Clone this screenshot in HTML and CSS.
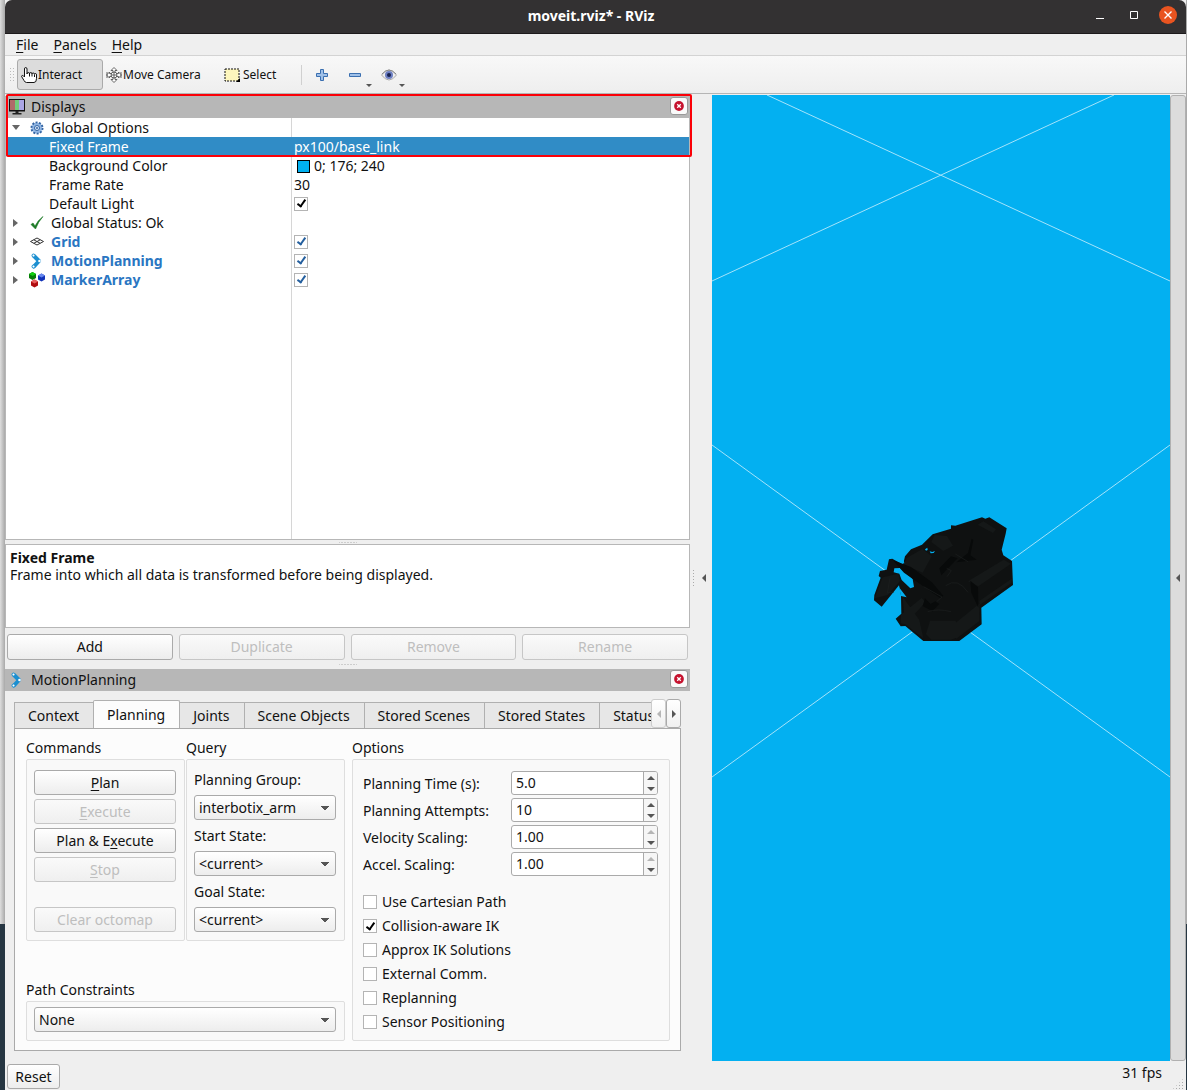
FILE: index.html
```html
<!DOCTYPE html>
<html lang="en">
<head>
<meta charset="utf-8">
<title>moveit.rviz* - RViz</title>
<link rel="stylesheet" href="styles.css">
</head>
<body>
<svg class="defs" aria-hidden="true">
  <defs>
    <symbol id="arm" viewBox="0 0 12 16">
      <path d="M3 3 8 8 3 13.500" fill="none" stroke="#1c8fd0" stroke-width="4" stroke-linejoin="round" stroke-linecap="round"/>
      <circle cx="2.500" cy="2.500" r="1.500" fill="#fff" stroke="#1c8fd0"/><circle cx="8.500" cy="8" r="1.300" fill="#fff"/><circle cx="2.500" cy="13.500" r="1.500" fill="#fff" stroke="#1c8fd0"/>
    </symbol>
    <symbol id="close" viewBox="0 0 18 18">
      <circle cx="9" cy="9" r="5.500" fill="#c6132f"/><path d="m7 7 4 4m0-4-4 4" stroke="#fff" stroke-width="1.500"/>
    </symbol>
  </defs>
</svg>
<div class="desktop">
<div class="window">
  <header class="titlebar">
    <h1>moveit.rviz* - RViz</h1>
    <div class="window-buttons">
      <button aria-label="Minimize"><svg width="18" height="18"><path d="M5 12.500h8" stroke="#fff"/></svg></button>
      <button aria-label="Maximize"><svg width="18" height="18"><path d="M5.500 5.500h7v7h-7z" fill="none" stroke="#fff"/></svg></button>
      <button aria-label="Close"><svg width="18" height="18"><circle cx="9" cy="9" r="9" fill="#e95420"/><path d="m5.500 5.500 7 7m0-7-7 7" stroke="#fff" stroke-width="1.400"/></svg></button>
    </div>
  </header>
  <nav class="menubar">
    <button><u>F</u>ile</button><button><u>P</u>anels</button><button><u>H</u>elp</button>
  </nav>
  <div class="toolbar">
    <span class="grip"></span>
    <button class="tool pressed"><svg width="16" height="16"><path d="M3.500 10V2Q3.500.5 4.700.5T6 2v5q0-1.500 1.300-1.500T8.500 7q0-1.500 1.300-1.500T11 7q0-1 1.200-1t1.300 1.300q0-.8 1-.8t1 1.500v3.500q0 4-2.500 4H5.500q-1.500 0-2.500-2L.700 9.700Q.300 8.700 1.300 8.500T3.500 10M8.500 7v2.500M11 7v2.500M13.500 7.500V10" fill="#fff" stroke="#111"/></svg>Interact</button>
    <button class="tool camera"><svg width="16" height="16" fill="#fff" stroke="#555" stroke-width=".9"><path d="m8 .5 3 3H9v3h3.500V5L15.500 8l-3 3V9.500H9v3h2l-3 3-3-3h2v-3H3.500V11L.500 8l3-3v1.500H7v-3H5z"/><circle cx="8" cy="8" r="3"/><path d="M1 5v6M15 5v6M5 8h6M8 5v6"/></svg>Move Camera</button>
    <button class="tool select"><svg width="17" height="14"><path d="M1 1h14v12H1z" fill="#fdf6bd" stroke="#111" stroke-dasharray="2 1"/><path d="m16 10v4h-4z" fill="#000"/></svg>Select</button>
    <span class="separator"></span>
    <button class="tool small" aria-label="Add tool"><svg width="14" height="14"><path d="M5.500 1.500h3v4h4v3h-4v4h-3v-4h-4v-3h4z" fill="#9fc0e8" stroke="#3a6fb0"/></svg></button>
    <button class="tool small menu" aria-label="Remove tool"><svg width="14" height="14"><path d="M1.500 5.500h11v3h-11z" fill="#9fc0e8" stroke="#3a6fb0"/></svg></button>
    <button class="tool small menu" aria-label="Tool visibility"><svg width="16" height="14"><path d="M.500 7Q8-3 15.500 7 8 17 .500 7z" fill="#eee" stroke="#aaa"/><path d="M1 6Q8-2 15 6" fill="none" stroke="#888"/><circle cx="8" cy="7" r="4" fill="#6d7fc2"/><circle cx="8" cy="7" r="2" fill="#17224f"/></svg></button>
  </div>

  <main class="workspace">
    <div class="docks">
      <section class="displays">
        <div class="dock-title"><svg width="18" height="16"><path d="M1 0h16v12.500H1z" fill="#111"/><path d="M2 1h5v10H2z" fill="#b06a6a"/><path d="M7 1h4v10H7z" fill="#72cc7c"/><path d="M11 1h5v10h-5z" fill="#aaa5e6"/><path d="M7.500 12h3v2h3v1.500h-9V14h3z" fill="#222"/></svg><h2>Displays</h2><button class="dock-close" aria-label="Close Displays"><svg width="16" height="16"><use href="#close"/></svg></button></div>
        <div class="tree">
          <table>
            <tbody>
            <tr class="top open"><th scope="row"><span><svg width="14" height="14"><circle cx="7" cy="7" r="5.500" fill="#9fc0e8" stroke="#3465a4" stroke-width="2" stroke-dasharray="2 1.400"/><circle cx="7" cy="7" r="4.500" fill="#8fb4e2"/><circle cx="7" cy="7" r="2.500" fill="#dce9f8" stroke="#3465a4"/><circle cx="7" cy="7" r="1" fill="#3465a4"/></svg>Global Options</span></th><td></td></tr>
            <tr class="chosen"><th scope="row">Fixed Frame</th><td>px100/base_link</td></tr>
            <tr><th scope="row">Background Color</th><td><span class="swatch"></span>0; 176; 240</td></tr>
            <tr><th scope="row">Frame Rate</th><td>30</td></tr>
            <tr><th scope="row"><label for="light">Default Light</label></th><td><input type="checkbox" id="light" checked></td></tr>
            <tr class="top"><th scope="row"><span><svg width="14" height="14"><path d="M1 8.500 3 7l2 3Q8 4 13 .5 8 6 5.500 13z" fill="#1d7a26" stroke="#1d7a26" stroke-width=".6"/></svg>Global Status: Ok</span></th><td></td></tr>
            <tr class="top display"><th scope="row"><span><svg width="14" height="14" fill="none" stroke="#333"><path d="m7 3 6.500 3.500L7 10 .500 6.500zM3.800 4.800l6.400 3.500m0-3.500L3.800 8.300"/></svg><label for="grid">Grid</label></span></th><td><input type="checkbox" id="grid" checked></td></tr>
            <tr class="top display"><th scope="row"><span><svg width="14" height="16"><use href="#arm"/></svg><label for="motion">MotionPlanning</label></span></th><td><input type="checkbox" id="motion" checked></td></tr>
            <tr class="top display"><th scope="row"><span><svg class="wide" width="18" height="16"><path d="m4.500 0 3.500 2v4L4.500 8 1 6V2z" fill="#087c08"/><path d="m4.500 0 3.500 2-3.500 2L1 2z" fill="#10d010"/><path d="m13.500 1.500 3.500 2v4l-3.500 2-3.500-2v-4z" fill="#1233b8"/><path d="m13.500 1.500 3.500 2-3.500 2-3.500-2z" fill="#6788f0"/><path d="m6.500 7.500 3.500 2v4l-3.500 2-3.500-2v-4z" fill="#b00d10"/><path d="m6.500 7.500 3.500 2-3.500 2-3.500-2z" fill="#e86060"/></svg><label for="marker">MarkerArray</label></span></th><td><input type="checkbox" id="marker" checked></td></tr>
            </tbody>
          </table>
        </div>
        <div class="highlight"></div>
      </section>
      <div class="splitter"></div>
      <section class="help"><h3>Fixed Frame</h3><p>Frame into which all data is transformed before being displayed.</p></section>
      <div class="actions"><button class="btn">Add</button><button class="btn" disabled>Duplicate</button><button class="btn" disabled>Remove</button><button class="btn" disabled>Rename</button></div>
      <div class="splitter lower"></div>
      <section class="motion">
        <div class="dock-title"><svg width="18" height="16"><use href="#arm"/></svg><h2>MotionPlanning</h2><button class="dock-close" aria-label="Close MotionPlanning"><svg width="16" height="16"><use href="#close"/></svg></button></div>
        <div class="tabs" role="tablist">
          <div class="tab-strip"><button role="tab">Context</button><button role="tab" aria-selected="true">Planning</button><button role="tab">Joints</button><button role="tab">Scene Objects</button><button role="tab">Stored Scenes</button><button role="tab">Stored States</button><button role="tab">Status</button></div>
          <button class="scroll" aria-label="Scroll left" disabled><i class="tri left"></i></button><button class="scroll" aria-label="Scroll right"><i class="tri right"></i></button>
        </div>
        <div class="planning">
          <section class="group commands"><h3>Commands</h3><div class="box">
            <button class="btn"><u>P</u>lan</button><button class="btn" disabled><u>E</u>xecute</button><button class="btn">Plan &amp; E<u>x</u>ecute</button><button class="btn" disabled><u>S</u>top</button><button class="btn last" disabled>Clear octomap</button></div></section>
          <section class="group query"><h3>Query</h3><div class="box">
            <label for="pg">Planning Group:</label><select id="pg"><option>interbotix_arm</option></select>
            <label for="ss">Start State:</label><select id="ss"><option>&lt;current&gt;</option></select>
            <label for="gs">Goal State:</label><select id="gs"><option>&lt;current&gt;</option></select></div></section>
          <section class="group path"><h3><label for="pc">Path Constraints</label></h3><div class="box"><select id="pc"><option>None</option></select></div></section>
          <section class="group options"><h3>Options</h3><div class="box">
            <div class="field"><label for="time">Planning Time (s):</label><div class="spin"><input id="time" value="5.0"><button aria-label="Increase"><i class="tri up"></i></button><button aria-label="Decrease"><i class="tri down"></i></button></div></div>
            <div class="field"><label for="tries">Planning Attempts:</label><div class="spin"><input id="tries" value="10"><button aria-label="Increase"><i class="tri up"></i></button><button aria-label="Decrease"><i class="tri down"></i></button></div></div>
            <div class="field"><label for="vel">Velocity Scaling:</label><div class="spin"><input id="vel" value="1.00"><button aria-label="Increase" disabled><i class="tri up"></i></button><button aria-label="Decrease"><i class="tri down"></i></button></div></div>
            <div class="field"><label for="acc">Accel. Scaling:</label><div class="spin"><input id="acc" value="1.00"><button aria-label="Increase" disabled><i class="tri up"></i></button><button aria-label="Decrease"><i class="tri down"></i></button></div></div>
            <div class="checks">
              <label><input type="checkbox">Use Cartesian Path</label>
              <label><input type="checkbox" checked>Collision-aware IK</label>
              <label><input type="checkbox">Approx IK Solutions</label>
              <label><input type="checkbox">External Comm.</label>
              <label><input type="checkbox">Replanning</label>
              <label><input type="checkbox">Sensor Positioning</label>
            </div></div></section>
        </div>
      </section>
    </div>
    <button class="collapse handle" aria-label="Hide left dock"><i class="tri left"></i></button>
    <div class="view">
      <svg viewBox="0 0 458 966" preserveAspectRatio="xMidYMid slice" role="img" aria-label="Robot arm on grid">
        <g stroke="#a5e3fa"><path d="M55 0 458 186M402 0 0 186M0 350 458 682M458 350 0 682"/></g>
        <g transform="translate(138 405) scale(.33333)">
          <path fill="#0f1111" d="M248 103 303 86V76l13 1 80-25 10 4 12-4 52 33-3 16-12 48 5 17 26 17 3 72-95 68 1 50-67 50H220l-54-45-14 1-15-23 17-15-1-55-6-30-52 64-23-19 1-16 19-52-6-5 4-15 20-4 7-31 10-2 32 18 6-25 18-21 33-14z"/>
          <path fill="#03b0f1" d="m133 205 17-1 38 33 4 24-11 4-26-25-7-19-17-4zM225 148l7-5 1 7-5 2zM239 154l8 2 8-3-4 6-9 1zM164 192l-8-6 5-4zM147 262l23 30-17-4z"/>
          <path fill="#151818" d="m98 232 47-11 5 22-37 42-39 10zM170 174l47-27 28 22-27 49-57-24zM254 105l37 3 18 29-29 16-36-27zM400 64l38 24-9 11-46-25zM354 244l31 15 98-68-22-12zM389 302l96-66v12l-96 67zM153 344l62-50 11 13-60 66-14-3zM158 290l50 70 12 55-55-43zM240 362h77l10 48-24 9h-59l-16-17zM310 374l78-63v52l-69 53z"/>
          <path fill="#080a0a" d="m128 180 55 21 62 45 35 41-9 8-49-35-60-42zM361 242l23 20 1 61-21-45zM218 318l29 16 21-22-12-8-14 8-17-17zM268 205l35-36 20 6-49 51zM319 187l35-28 11-43 5 4-9 46 19 13z"/>
          <path fill="none" stroke="#1c1f1f" stroke-width="2" d="m221 260 55 31-16 14M287 257q36-26 67 20M120 235l-8 44 20-3M290 205l14 7-13 18M316 162l38 23M233 335q30-10 70 0"/>
        </g>
      </svg>
    </div>
    <button class="collapse raised" aria-label="Show right dock"><i class="tri left"></i></button>
  </main>
  <footer class="statusbar"><button class="btn">Reset</button><output>31 fps</output><span class="resize"></span></footer>
</div>
</div>
</body>
</html>
```
FILE: styles.css
```css
*, ::before, ::after { box-sizing: border-box; }
body { margin: 0; color: #111; font: 14px/18px "Noto Sans", "Open Sans", sans-serif; }
button, input, select { margin: 0; padding: 0; border: 0; color: inherit; font: inherit; background: none; }
h1, h2, h3, p { margin: 0; font-size: 14px; font-weight: 400; }
svg { display: block; flex: none; }
u { text-underline-offset: 2px; }
.defs { position: absolute; width: 0; height: 0; }

.desktop { min-height: 100vh; display: flex; padding: 0 1px 0 5px; background: linear-gradient(90deg, #dedede, #a9a9a9 5px, #aaa 6px) 0 0 / 100% 924px no-repeat, #263642; }
.window { flex: 1; min-width: 0; display: flex; flex-direction: column; background: #efefef; }

.titlebar { height: 34px; display: grid; grid-template-columns: 1fr auto 1fr; align-items: center; padding-right: 9px; background: #333132; border-bottom: 1px solid #1d1a1b; border-radius: 7px 7px 0 0; color: #fff; }
.titlebar h1 { grid-column: 2; font-weight: 700; padding-bottom: 2px; }
.window-buttons { display: flex; justify-content: flex-end; gap: 16px; padding-bottom: 3px; }

.menubar { height: 22px; display: flex; gap: 15px; padding: 0 11px; border-bottom: 1px solid #d3d3d3; }
.toolbar { height: 38px; display: flex; align-items: center; padding: 0 4px; background: linear-gradient(#f8f8f8, #eee); border-bottom: 1px solid #b5b5b5; font-size: 12px; }
.grip { width: 5px; height: 16px; margin-right: 3px; background: radial-gradient(circle, #bbb 1px, transparent 1px) 0 0 / 3px 3px; }
.tool { height: 31px; display: flex; align-items: center; gap: 2px; padding: 0 3px; }
.pressed { width: 86px; gap: 1px; background: #dcdcdc; border: 1px solid #aaa; border-radius: 3px; }
.camera { width: 118px; gap: 1px; }
.select { width: 80px; }
.separator { width: 1px; height: 20px; background: #d0d0d0; margin-right: 10px; }
.small { width: 33px; position: relative; }
.menu::after { content: ""; position: absolute; right: 6px; bottom: 3px; border: 3px solid transparent; border-top-color: #555; border-bottom: 0; }

.workspace { flex: 1; display: flex; padding-top: 1px; }
.docks { width: 685px; flex: none; display: flex; flex-direction: column; padding: 1px 0 10px; }
.displays { flex: 1; display: flex; flex-direction: column; position: relative; }
.dock-title { height: 22px; display: flex; align-items: center; gap: 5px; padding: 0 2px 0 3px; background: #b7b7b7; }
.dock-title h2 { flex: 1; }
.dock-close { width: 18px; height: 18px; padding: 0; display: grid; place-items: center; background: #fafafa; border: 1px solid #999; border-radius: 3px; margin-bottom: 2px; }
.highlight { position: absolute; inset: -2px -2px auto 1px; height: 63px; border: 2px solid #fb0007; border-radius: 2px; }
.tree { flex: 1; border: 1px solid #b7b7b7; border-top: 0; background: linear-gradient(#d6d6d6, #d6d6d6) 285px 0 / 1px 100% no-repeat #fff; }
.tree table { width: 100%; table-layout: fixed; border-collapse: collapse; }
.tree tr { height: 19px; }
.tree th { width: 286px; padding: 0 0 0 43px; font-weight: 400; text-align: left; }
.tree td { padding: 0 0 0 2px; }
.tree th, .tree td { line-height: 19px; }
.tree .top th { padding-left: 7px; }
.tree th span { display: flex; align-items: center; height: 19px; }
.tree th span::before { content: ""; margin-right: 12px; border: 4px solid transparent; border-left: 5px solid #666; border-right: 0; flex: none; }
.tree .open th span::before { border: 4px solid transparent; border-top: 5px solid #666; border-bottom: 0; margin: 0 10px 0 -1px; }
.tree th svg { margin-right: 7px; }
.tree th svg.wide { margin: 0 5px 0 -2px; }
.tree .display label { color: #2a76c2; font-weight: 700; }
.tree .chosen { background: #308cc6; color: #fff; }
.swatch { display: inline-block; width: 13px; height: 13px; margin: 0 4px 0 3px; border: 1px solid #000; background: #00b0f0; vertical-align: -2px; }

input[type="checkbox"] { appearance: none; flex: none; width: 14px; height: 14px; background: #fff; border: 1px solid #b4b4b4; display: grid; place-items: center; }
input[type="checkbox"]:checked::after { content: ""; width: 5px; height: 9px; border: solid #000; border-width: 0 2px 2px 0; transform: rotate(35deg); margin-bottom: 2px; }
.tree .display input[type="checkbox"]:checked::after { border-color: #245f9e; }

.splitter { height: 4px; background: radial-gradient(circle, #aaa 1px, transparent 1px) center / 3px 3px repeat-x; width: 18px; margin: 0 auto; }
.lower { height: 9px; }
.help { height: 84px; padding: 4px; background: #fff; border: 1px solid #b7b7b7; line-height: 17px; }
.help h3 { font-weight: 700; }
.actions { display: grid; grid-template-columns: repeat(4, 1fr); gap: 6px; padding: 6px 2px 0; }
.btn { height: 26px; border: 1px solid #aaa; border-radius: 3px; background: linear-gradient(#fff, #ededed); }
.btn:disabled { color: #bebebe; border-color: #c6c6c6; background: linear-gradient(#fafafa, #efefef); }

.tabs { height: 37px; display: flex; align-items: flex-end; padding: 0 9px; }
.tab-strip { flex: 1; min-width: 0; overflow: hidden; height: 29px; display: flex; align-items: flex-end; }
.tab-strip button { flex: none; height: 26px; padding: 0 14px 0 13px; background: #e7e7e7; border: 1px solid #b0b0b0; border-width: 1px 0 0 1px; }
.tab-strip button[aria-selected] { height: 28px; background: #fcfcfc; border-right-width: 1px; border-radius: 2px 2px 0 0; }
.tab-strip button[aria-selected] + button { border-left: 0; }
.scroll { width: 15px; height: 29px; display: grid; place-items: center; border: 1px solid #aaa; border-radius: 3px; background: linear-gradient(#fff, #f0f0f0); }
.scroll:disabled { border-color: #ccc; }
.planning { margin: 0 9px; padding: 10px 10px 9px 11px; background: #fcfcfc; border: 1px solid #aaa; display: grid; grid-template-columns: 159px 159px 1fr; grid-template-rows: 1fr auto; column-gap: 1px; }
.group { display: flex; flex-direction: column; }
.box { padding: 10px 8px 7px 7px; background: #f9f9f9; border: 1px solid #dedede; border-radius: 2px; }
.group h3 { height: 20px; flex: none; }
.commands, .query { height: 202px; }
.commands .box, .query .box { flex: 1; display: flex; flex-direction: column; }
.commands .box { gap: 4px; }
.commands .btn { height: 25px; }
.commands .last { margin-top: 21px; }
.query .box { padding-top: 11px; padding-bottom: 0; }
.query label { height: 24px; }
.query select { margin-bottom: 7px; }
select { appearance: none; width: 100%; height: 25px; padding: 0 20px 0 4px; border: 1px solid #aaa; border-radius: 3px; background: conic-gradient(from -45deg at 50% 100%, #555 90deg, transparent 0) right 6px center / 8px 4px no-repeat, linear-gradient(#fff, #ededed); }
.path { grid-column: 1 / 3; }
.path .box { padding-top: 5px; padding-bottom: 8px; }
.options { grid-column: 3; grid-row: 1 / 3; margin-left: 6px; }
.options .box { padding: 11px 11px 6px 10px; flex: 1; }
.field { height: 27px; display: flex; align-items: flex-start; justify-content: space-between; }
.field label { padding-top: 4px; }
.spin { width: 147px; height: 24px; display: grid; grid-template: 1fr 1fr / 1fr 14px; border: 1px solid #aaa; border-radius: 3px; background: #fff; overflow: hidden; }
.spin input { grid-row: 1 / 3; min-width: 0; padding-left: 4px; }
.spin button { border-left: 1px solid #aaa; background: #f6f6f6; display: grid; place-items: center; }
.checks { display: grid; grid-auto-rows: 24px; padding-top: 11px; }
.checks label { display: flex; align-items: center; gap: 5px; }

.tri { border: 4px solid transparent; }
.left { border-right-color: #555; border-left: 0; }
.right { border-left-color: #555; border-right: 0; }
.up { border-bottom-color: #555; border-top: 0; }
.down { border-top-color: #555; border-bottom: 0; }
:disabled > .tri { opacity: .4; }
.collapse { width: 22px; flex: none; display: flex; align-items: center; justify-content: flex-end; padding-right: 6px; }
.handle { justify-content: space-between; padding-left: 2px; }
.handle::before { content: ""; width: 3px; height: 18px; background: radial-gradient(circle, #aaa 1px, transparent 1px) 0 0 / 3px 3px; }
.raised { width: 16px; background: #dcdcdc; border: 1px solid #b0b0b0; border-radius: 3px; padding-right: 5px; }
.view { flex: 1; min-width: 0; position: relative; background: #03b0f1; }
.view svg { position: absolute; width: 100%; height: 100%; }
.statusbar { height: 29px; display: flex; justify-content: space-between; align-items: center; padding: 0 2px; }
.statusbar .btn { width: 53px; height: 25px; align-self: flex-end; margin-bottom: 1px; }
.statusbar output { margin-left: auto; padding: 0 10px 6px 0; }
.resize { width: 12px; height: 12px; align-self: flex-end; background: radial-gradient(circle, #aaa 1px, transparent 1px) 0 0 / 3px 3px; clip-path: polygon(100% 0, 100% 100%, 0 100%); }
```
